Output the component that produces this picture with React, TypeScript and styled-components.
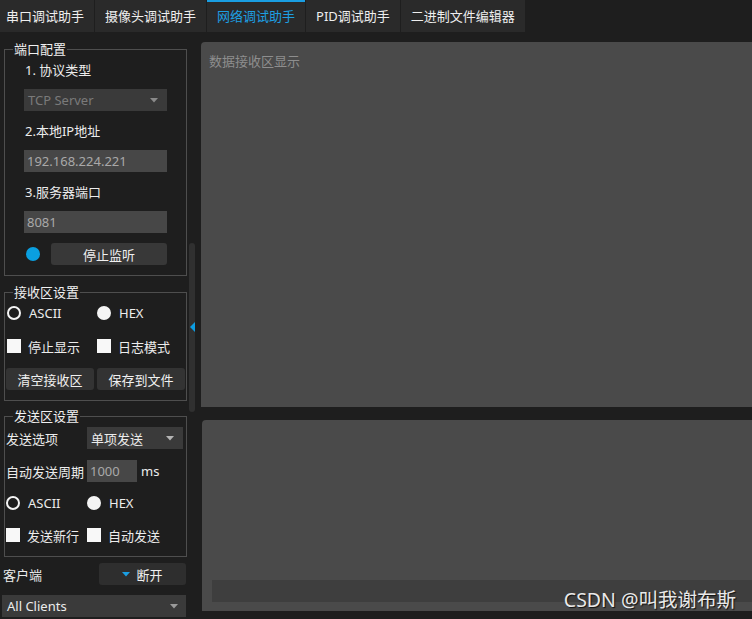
import React from "react";
import styled, { createGlobalStyle } from "styled-components";

const GlobalStyle = createGlobalStyle`
  html, body {
    margin: 0;
    padding: 0;
    background: #1e1e1e;
  }
  body {
    font-family: "Noto Sans", "Noto Sans CJK SC", sans-serif;
    font-size: 13px;
    color: #ececec;
  }
`;

const Window = styled.div`
  position: relative;
  width: 752px;
  height: 619px;
  overflow: hidden;
  background: #1e1e1e;
  display: flex;
  flex-direction: column;
`;

const TabBar = styled.div`
  display: flex;
  gap: 1px;
  height: 32px;
  flex-shrink: 0;
`;

const Tab = styled.div<{ $active?: boolean; $first?: boolean }>`
  box-sizing: border-box;
  height: 32px;
  padding: 0 10px 0 ${(p) => (p.$first ? 6 : 10)}px;
  background: #2a2a2a;
  border-top: 2px solid ${(p) => (p.$active ? "#1a9ee2" : "transparent")};
  color: ${(p) => (p.$active ? "#1d9fe2" : "#eeeeee")};
  line-height: 29px;
  white-space: nowrap;
`;

const Main = styled.div`
  flex: 1;
  display: flex;
`;

const LeftPane = styled.div`
  width: 188px;
  padding-top: 10px;
  display: flex;
  flex-direction: column;
`;

const Group = styled.fieldset<{ $top?: number }>`
  box-sizing: border-box;
  width: 183px;
  min-width: 0;
  margin: ${(p) => p.$top ?? 0}px 0 0 4px;
  padding: 0;
  border: 1px solid #4e4e4e;
`;

const GroupTitle = styled.legend`
  margin-left: 8px;
  padding: 0 1px;
  line-height: 14px;
  font-size: 13px;
  color: #f0f0f0;
`;

const PortBody = styled.div`
  display: flex;
  flex-direction: column;
  padding: 4px 19px 10px 19px;
`;

const FieldLabel = styled.div`
  height: 20px;
  line-height: 20px;
  margin: 0 0 9px 1px;
`;

const Combo = styled.div<{ $bg?: string; $fg?: string }>`
  box-sizing: border-box;
  height: 22px;
  display: flex;
  align-items: center;
  justify-content: space-between;
  padding: 0 9px 0 4px;
  background: ${(p) => p.$bg ?? "#3a3a3a"};
  color: ${(p) => p.$fg ?? "#ececec"};
  white-space: nowrap;
`;

const Input = styled.div<{ $w?: number }>`
  box-sizing: border-box;
  height: 22px;
  ${(p) => (p.$w ? `width: ${p.$w}px;` : "")}
  line-height: 22px;
  padding: 0 3px;
  background: #474747;
  color: #a9a9a9;
`;

const Spaced = styled.div`
  margin-bottom: 10px;
`;

const StatusRow = styled.div`
  display: flex;
  align-items: center;
  height: 22px;
`;

const Led = styled.div`
  width: 14px;
  height: 14px;
  margin: 0 11px 0 2px;
  border-radius: 50%;
  background: #0a9fe0;
`;

const Button = styled.div<{ $bg?: string; $w?: number }>`
  box-sizing: border-box;
  height: 22px;
  ${(p) => (p.$w ? `width: ${p.$w}px;` : "flex: 1;")}
  display: flex;
  align-items: center;
  justify-content: center;
  gap: 6px;
  border-radius: 3px;
  background: ${(p) => p.$bg ?? "#363636"};
  color: #f0f0f0;
  white-space: nowrap;
`;

const RecvBody = styled.div`
  padding: 4px 1px 10px 1px;
`;

const OptionGrid = styled.div<{ $col: number; $mt?: number }>`
  display: grid;
  grid-template-columns: ${(p) => p.$col}px 1fr;
  height: 20px;
  margin-top: ${(p) => p.$mt ?? 0}px;
  padding-left: 1px;
`;

const Option = styled.div`
  display: flex;
  align-items: center;
  gap: 8px;
  white-space: nowrap;
`;

const Radio = styled.span<{ $on?: boolean }>`
  box-sizing: border-box;
  width: 14px;
  height: 14px;
  border-radius: 50%;
  border: 2px solid #f4f4f4;
  background: ${(p) => (p.$on ? "#f4f4f4" : "#1e1e1e")};
`;

const Check = styled.span`
  width: 14px;
  height: 14px;
  background: #f8f8f8;
  margin-right: -1px;
`;

const ButtonRow = styled.div`
  display: flex;
  gap: 3px;
  margin-top: 12px;
`;

const SendBody = styled.div`
  padding: 4px 2px 11px 0;
`;

const FormRow = styled.div<{ $mt?: number }>`
  display: grid;
  grid-template-columns: 81px auto 1fr;
  align-items: center;
  height: 22px;
  margin-top: ${(p) => p.$mt ?? 0}px;
  padding-left: 1px;
  white-space: nowrap;
`;

const Unit = styled.span`
  margin-left: 4px;
`;

const ClientRow = styled.div`
  display: flex;
  align-items: center;
  justify-content: space-between;
  height: 22px;
  margin: 6px 2px 0 3px;
`;

const ClientCombo = styled(Combo)`
  margin: 10px 2px 0 2px;
  padding-left: 5px;
  padding-right: 8px;
`;

const ScrollTrack = styled.div`
  position: relative;
  width: 7px;
  margin-left: 1px;
`;

const ScrollThumb = styled.div`
  width: 6px;
  height: 169px;
  margin-top: 211px;
  border-radius: 3px;
  background: #303030;
`;

const SplitHandle = styled.div`
  position: absolute;
  left: 1px;
  top: 290px;
  width: 0;
  height: 0;
  border-top: 5px solid transparent;
  border-bottom: 5px solid transparent;
  border-right: 5px solid #0c9de2;
`;

const RightPane = styled.div`
  flex: 1;
  display: flex;
  flex-direction: column;
  padding-top: 10px;
  margin-left: 5px;
`;

const RecvArea = styled.div`
  height: 365px;
  box-sizing: border-box;
  padding: 10px 8px;
  border-radius: 4px 0 0 0;
  background: #4a4a4a;
  color: #8e8e8e;
  line-height: 18px;
`;

const SendArea = styled.div`
  height: 191px;
  margin: 13px 0 0 1px;
  box-sizing: border-box;
  padding: 0 0 9px 10px;
  border-radius: 4px 0 0 0;
  background: #4a4a4a;
  display: flex;
  flex-direction: column;
  justify-content: flex-end;
`;

const SendLine = styled.div`
  height: 22px;
  background: #3e3e3e;
`;

const Watermark = styled.div`
  position: absolute;
  right: 16px;
  bottom: 7px;
  font-size: 19.5px;
  line-height: 24px;
  color: #e9e9e9;
  text-shadow: 1px 1px 1px #111;
`;

const Arrow = ({ color = "#b4b4b4" }: { color?: string }) => (
  <svg width="8" height="5" viewBox="0 0 8 5">
    <path d="M0 0 L8 0 L4 4.5 Z" fill={color} />
  </svg>
);

const tabs = ["串口调试助手", "摄像头调试助手", "网络调试助手", "PID调试助手", "二进制文件编辑器"];

export default function App() {
  return (
    <Window>
      <GlobalStyle />
      <TabBar>
        {tabs.map((t, i) => (
          <Tab key={t} $first={i === 0} $active={i === 2}>
            {t}
          </Tab>
        ))}
      </TabBar>
      <Main>
        <LeftPane>
          <Group>
            <GroupTitle>端口配置</GroupTitle>
            <PortBody>
              <FieldLabel>1. 协议类型</FieldLabel>
              <Spaced>
                <Combo $bg="#3a3a3a" $fg="#7a7a7a">
                  TCP Server
                  <Arrow color="#8a8a8a" />
                </Combo>
              </Spaced>
              <FieldLabel>2.本地IP地址</FieldLabel>
              <Spaced>
                <Input>192.168.224.221</Input>
              </Spaced>
              <FieldLabel>3.服务器端口</FieldLabel>
              <Spaced>
                <Input>8081</Input>
              </Spaced>
              <StatusRow>
                <Led />
                <Button $bg="#383838">停止监听</Button>
              </StatusRow>
            </PortBody>
          </Group>

          <Group $top={9}>
            <GroupTitle>接收区设置</GroupTitle>
            <RecvBody>
              <OptionGrid $col={90}>
                <Option>
                  <Radio />
                  ASCII
                </Option>
                <Option>
                  <Radio $on />
                  HEX
                </Option>
              </OptionGrid>
              <OptionGrid $col={90} $mt={13}>
                <Option>
                  <Check />
                  停止显示
                </Option>
                <Option>
                  <Check />
                  日志模式
                </Option>
              </OptionGrid>
              <ButtonRow>
                <Button $bg="#333333">清空接收区</Button>
                <Button $bg="#333333">保存到文件</Button>
              </ButtonRow>
            </RecvBody>
          </Group>

          <Group $top={8}>
            <GroupTitle>发送区设置</GroupTitle>
            <SendBody>
              <FormRow $mt={0}>
                <span>发送选项</span>
                <Combo $bg="#3a3a3a" style={{ width: 96 }}>
                  单项发送
                  <Arrow />
                </Combo>
              </FormRow>
              <FormRow $mt={11}>
                <span>自动发送周期</span>
                <Input $w={50}>1000</Input>
                <Unit>ms</Unit>
              </FormRow>
              <OptionGrid $col={81} $mt={11}>
                <Option>
                  <Radio />
                  ASCII
                </Option>
                <Option>
                  <Radio $on />
                  HEX
                </Option>
              </OptionGrid>
              <OptionGrid $col={81} $mt={12}>
                <Option>
                  <Check />
                  发送新行
                </Option>
                <Option>
                  <Check />
                  自动发送
                </Option>
              </OptionGrid>
            </SendBody>
          </Group>

          <ClientRow>
            <span>客户端</span>
            <Button $bg="#2e2e2e" $w={87}>
              <Arrow color="#1a9ee2" />
              断开
            </Button>
          </ClientRow>
          <ClientCombo $bg="#3a3a3a">
            All Clients
            <Arrow color="#9a9a9a" />
          </ClientCombo>
        </LeftPane>

        <ScrollTrack>
          <ScrollThumb />
          <SplitHandle />
        </ScrollTrack>

        <RightPane>
          <RecvArea>数据接收区显示</RecvArea>
          <SendArea>
            <SendLine />
          </SendArea>
        </RightPane>
      </Main>
      <Watermark>CSDN @叫我谢布斯</Watermark>
    </Window>
  );
}
